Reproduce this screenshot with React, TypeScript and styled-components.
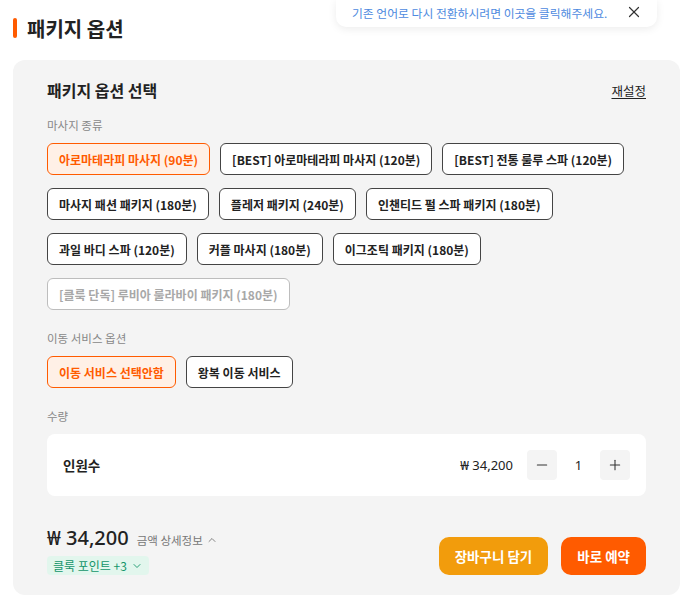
import styled, { createGlobalStyle } from "styled-components";
import { X, Minus, Plus, ChevronUp, ChevronDown } from "lucide-react";

const GlobalStyle = createGlobalStyle`
    body {
        margin: 0;
        background: #ffffff;
        font-family: "Noto Sans CJK KR", "Noto Sans", sans-serif;
        color: #222;
    }
    * { box-sizing: border-box; }
`;

const Page = styled.div`
    width: 687px;
    padding: 0 7px 0 13px;
    position: relative;
`;

const Header = styled.header`
    height: 56px;
    margin-bottom: 4px;
    display: flex;
    align-items: center;
    gap: 10px;
`;

const Bar = styled.span`
    width: 4px;
    height: 20px;
    border-radius: 2px;
    background: #ff5b00;
`;

const PageTitle = styled.h1`
    margin: 0;
    font-size: 20px;
    font-weight: 700;
    color: #222;
`;

const Toast = styled.div`
    position: absolute;
    top: 0;
    left: 336px;
    width: 321px;
    height: 27px;
    background: #fff;
    border-radius: 0 0 10px 10px;
    box-shadow: 0 2px 8px rgba(0, 0, 0, 0.08);
    display: flex;
    align-items: center;
    justify-content: space-between;
    padding: 0 14px 3px 16px;
`;

const ToastText = styled.span`
    font-size: 11.8px;
    color: #4d8ae0;
`;

const Panel = styled.section`
    background: #f4f4f4;
    border-radius: 12px;
    padding: 18px 34px 20px;
`;

const PanelHead = styled.div`
    display: flex;
    align-items: center;
    justify-content: space-between;
    height: 24px;
`;

const PanelTitle = styled.h2`
    margin: 0;
    font-size: 16px;
    font-weight: 700;
    color: #222;
`;

const Reset = styled.a`
    font-size: 12.5px;
    color: #222;
    text-decoration: underline;
    text-underline-offset: 2px;
    cursor: pointer;
`;

const Group = styled.div<{ $first?: boolean }>`
    margin-top: ${(p) => (p.$first ? "14px" : "19px")};
`;

const Label = styled.div`
    font-size: 11.5px;
    line-height: 18px;
    color: #888;
    margin-bottom: 9px;
`;

const Options = styled.div`
    display: flex;
    flex-wrap: wrap;
    gap: 13px 10px;
`;

const Option = styled.button<{ $state?: "on" | "off" | "disabled" }>`
    height: 32px;
    padding: 0 11px;
    border-radius: 6px;
    font-family: inherit;
    font-size: 12px;
    font-weight: 600;
    cursor: pointer;
    border: 1px solid
        ${(p) => (p.$state === "on" ? "#ff5b00" : p.$state === "disabled" ? "#bdbdbd" : "#444")};
    background: ${(p) => (p.$state === "on" ? "#fff0e6" : "#fff")};
    color: ${(p) => (p.$state === "on" ? "#ff5b00" : p.$state === "disabled" ? "#a8a8a8" : "#222")};
`;

const QtyBox = styled.div`
    background: #fff;
    border-radius: 8px;
    padding: 16px;
    display: flex;
    align-items: center;
    justify-content: space-between;
`;

const QtyName = styled.span`
    font-size: 13.5px;
    font-weight: 700;
    color: #222;
`;

const QtyRight = styled.div`
    display: flex;
    align-items: center;
`;

const UnitPrice = styled.span`
    font-family: "Noto Sans", sans-serif;
    font-size: 13px;
    color: #222;
    margin-right: 14px;
`;

const StepBtn = styled.button`
    width: 30px;
    height: 30px;
    border: none;
    border-radius: 4px;
    background: #f4f4f4;
    display: flex;
    align-items: center;
    justify-content: center;
    color: #333;
    padding: 0;
`;

const Count = styled.span`
    width: 43px;
    text-align: center;
    font-family: "Noto Sans", sans-serif;
    font-size: 13px;
    color: #222;
`;

const Footer = styled.div`
    margin-top: 28px;
    display: flex;
    align-items: flex-end;
    justify-content: space-between;
`;

const PriceCol = styled.div`
    display: flex;
    flex-direction: column;
    align-items: flex-start;
    gap: 6px;
`;

const PriceLine = styled.div`
    display: flex;
    align-items: baseline;
    height: 26px;
`;

const Total = styled.span`
    font-family: "Noto Sans", sans-serif;
    font-size: 20px;
    font-weight: 500;
    color: #222;
`;

const Detail = styled.span`
    margin-left: 8px;
    font-size: 11.5px;
    color: #777;
    display: inline-flex;
    align-items: center;
    gap: 3px;
`;

const Points = styled.span`
    height: 19px;
    padding: 0 6px;
    border-radius: 4px;
    background: #e2f6ed;
    color: #13956a;
    font-size: 12px;
    display: inline-flex;
    align-items: center;
    gap: 4px;
`;

const Actions = styled.div`
    display: flex;
    gap: 13px;
`;

const ActionBtn = styled.button<{ $color: string }>`
    height: 38px;
    padding: 0 16px;
    border: none;
    border-radius: 10px;
    background: ${(p) => p.$color};
    color: #fff;
    font-family: inherit;
    font-size: 13.5px;
    font-weight: 700;
`;

const massage = [
    { name: "아로마테라피 마사지 (90분)", state: "on" as const },
    { name: "[BEST] 아로마테라피 마사지 (120분)" },
    { name: "[BEST] 전통 룰루 스파 (120분)" },
    { name: "마사지 패션 패키지 (180분)" },
    { name: "플레저 패키지 (240분)" },
    { name: "인챈티드 펄 스파 패키지 (180분)" },
    { name: "과일 바디 스파 (120분)" },
    { name: "커플 마사지 (180분)" },
    { name: "이그조틱 패키지 (180분)" },
    { name: "[클룩 단독] 루비아 룰라바이 패키지 (180분)", state: "disabled" as const },
];

export default function App() {
    return (
        <Page>
            <GlobalStyle />
            <Toast>
                <ToastText>기존 언어로 다시 전환하시려면 이곳을 클릭해주세요.</ToastText>
                <X size={18} strokeWidth={1.6} color="#333" />
            </Toast>
            <Header>
                <Bar />
                <PageTitle>패키지 옵션</PageTitle>
            </Header>
            <Panel>
                <PanelHead>
                    <PanelTitle>패키지 옵션 선택</PanelTitle>
                    <Reset>재설정</Reset>
                </PanelHead>
                <Group $first>
                    <Label>마사지 종류</Label>
                    <Options>
                        {massage.map((m) => (
                            <Option key={m.name} $state={m.state}>
                                {m.name}
                            </Option>
                        ))}
                    </Options>
                </Group>
                <Group>
                    <Label>이동 서비스 옵션</Label>
                    <Options>
                        <Option $state="on">이동 서비스 선택안함</Option>
                        <Option>왕복 이동 서비스</Option>
                    </Options>
                </Group>
                <Group>
                    <Label>수량</Label>
                    <QtyBox>
                        <QtyName>인원수</QtyName>
                        <QtyRight>
                            <UnitPrice>₩ 34,200</UnitPrice>
                            <StepBtn>
                                <Minus size={16} strokeWidth={1.6} />
                            </StepBtn>
                            <Count>1</Count>
                            <StepBtn>
                                <Plus size={16} strokeWidth={1.6} />
                            </StepBtn>
                        </QtyRight>
                    </QtyBox>
                </Group>
                <Footer>
                    <PriceCol>
                        <PriceLine>
                            <Total>₩ 34,200</Total>
                            <Detail>
                                금액 상세정보 <ChevronUp size={12} strokeWidth={1.8} />
                            </Detail>
                        </PriceLine>
                        <Points>
                            클룩 포인트 +3 <ChevronDown size={12} strokeWidth={1.8} />
                        </Points>
                    </PriceCol>
                    <Actions>
                        <ActionBtn $color="#f29c0c">장바구니 담기</ActionBtn>
                        <ActionBtn $color="#ff5b00">바로 예약</ActionBtn>
                    </Actions>
                </Footer>
            </Panel>
        </Page>
    );
}
